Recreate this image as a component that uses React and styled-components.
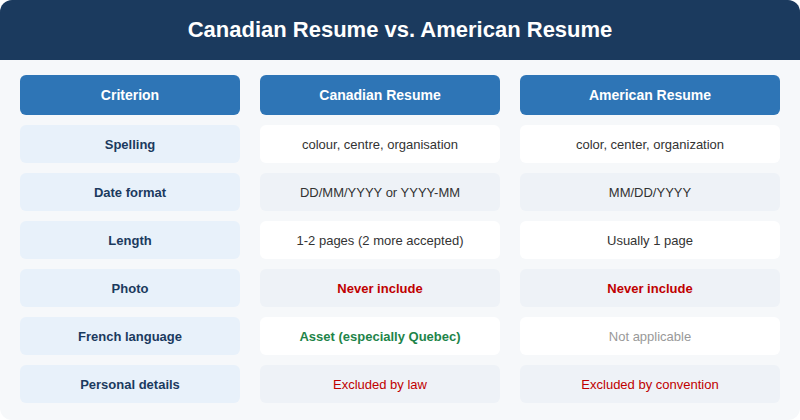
import React from 'react';
import styled, { createGlobalStyle } from 'styled-components';

const GlobalStyle = createGlobalStyle`
  html, body {
    margin: 0;
    padding: 0;
    background: #ffffff;
  }
  body {
    font-family: "Liberation Sans", Arial, sans-serif;
  }
`;

const Card = styled.div`
  width: 800px;
  height: 420px;
  background: #f6f8fa;
  border-radius: 12px;
  overflow: hidden;
  box-sizing: border-box;
`;

const Header = styled.div`
  height: 60px;
  background: #1b3a5e;
  display: flex;
  align-items: center;
  justify-content: center;
`;

const Title = styled.h1`
  margin: 0;
  color: #ffffff;
  font-size: 22px;
  font-weight: 700;
`;

const Table = styled.div`
  display: grid;
  grid-template-columns: 220px 240px 260px;
  grid-auto-rows: 38px;
  grid-template-rows: 40px;
  column-gap: 20px;
  row-gap: 10px;
  padding: 15px 20px 0;
`;

const HeadCell = styled.div`
  background: #2e75b6;
  border-radius: 6px;
  display: flex;
  align-items: center;
  justify-content: center;
  color: #ffffff;
  font-size: 14px;
  font-weight: 700;
`;

const LabelCell = styled.div`
  background: #e8f1fa;
  border-radius: 6px;
  display: flex;
  align-items: center;
  justify-content: center;
  color: #1b3a5e;
  font-size: 13px;
  font-weight: 700;
`;

const tones = {
  plain: { color: '#333333', weight: 400 },
  bad: { color: '#c00000', weight: 700 },
  good: { color: '#1e8449', weight: 700 },
  muted: { color: '#999999', weight: 400 },
  warn: { color: '#c00000', weight: 400 },
};

const ValueCell = styled.div`
  background: ${(p) => (p.$alt ? '#eef2f7' : '#ffffff')};
  border-radius: 6px;
  display: flex;
  align-items: center;
  justify-content: center;
  font-size: 13px;
  color: ${(p) => tones[p.$tone].color};
  font-weight: ${(p) => tones[p.$tone].weight};
`;

const rows = [
  ['Spelling', ['colour, centre, organisation', 'plain'], ['color, center, organization', 'plain']],
  ['Date format', ['DD/MM/YYYY or YYYY-MM', 'plain'], ['MM/DD/YYYY', 'plain']],
  ['Length', ['1-2 pages (2 more accepted)', 'plain'], ['Usually 1 page', 'plain']],
  ['Photo', ['Never include', 'bad'], ['Never include', 'bad']],
  ['French language', ['Asset (especially Quebec)', 'good'], ['Not applicable', 'muted']],
  ['Personal details', ['Excluded by law', 'warn'], ['Excluded by convention', 'warn']],
];

export default function App() {
  return (
    <>
      <GlobalStyle />
      <Card>
        <Header>
          <Title>Canadian Resume vs. American Resume</Title>
        </Header>
        <Table>
          <HeadCell>Criterion</HeadCell>
          <HeadCell>Canadian Resume</HeadCell>
          <HeadCell>American Resume</HeadCell>
          {rows.map(([label, ca, us], i) => (
            <React.Fragment key={label}>
              <LabelCell>{label}</LabelCell>
              <ValueCell $alt={i % 2 === 1} $tone={ca[1]}>{ca[0]}</ValueCell>
              <ValueCell $alt={i % 2 === 1} $tone={us[1]}>{us[0]}</ValueCell>
            </React.Fragment>
          ))}
        </Table>
      </Card>
    </>
  );
}
